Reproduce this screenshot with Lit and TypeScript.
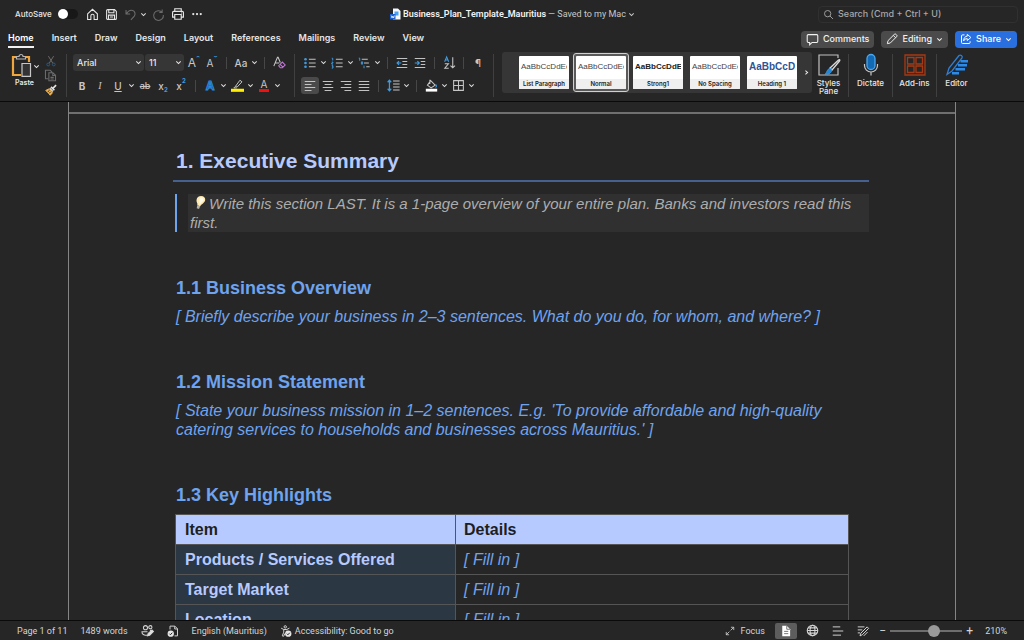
import { LitElement, html, css, svg, nothing, TemplateResult } from "lit";
import { customElement, state } from "lit/decorators.js";
import { classMap } from "lit/directives/class-map.js";

const icon = (body: TemplateResult, size = 14, box = 16) => html`<svg
  class="icon"
  width=${size}
  height=${size}
  viewBox="0 0 ${box} ${box}"
  aria-hidden="true"
>
  ${body}
</svg>`;

const BLUE = "#3f9be0";

const I = {
  home: svg`<path d="M2 7.2 8 1.6l6 5.6v7H10V9.6a2 2 0 0 0-4 0v4.6H2z"/>`,
  save: svg`<path d="M2 3.2C2 2.5 2.5 2 3.200 2h8.600L14 4.200v8.600c0 .7-.5 1.200-1.200 1.200H3.200C2.500 14 2 13.500 2 12.800zM4.600 2v3.800h6.400V2M4.300 14V8.800h7.400V14M6 11h4"/>`,
  undo: svg`<path d="M2.500 2.500v5h5M2.800 7.200C5 3.800 8 2.200 10.700 3.200c3 1.200 3.700 4.400 2 6.800L8.500 14.500"/>`,
  redo: svg`<path d="M12.500 1.800v3.700H9M12.600 5.400A6 6 0 1 0 14 8.600"/>`,
  print: svg`<path d="M4.300 5V2h7.400v3M4 11.500H1.800V6.200c0-.7.5-1.200 1.200-1.200h10c.7 0 1.200.5 1.200 1.200v5.300H12M4.300 8.600h7.400V14H4.300zM11.500 6.800h1"/>`,
  dots: svg`<g fill="currentColor" stroke="none"><circle cx="3" cy="8" r="1.500"/><circle cx="8" cy="8" r="1.500"/><circle cx="13" cy="8" r="1.500"/></g>`,
  search: svg`<circle cx="6.800" cy="6.800" r="4.600"/><path d="m10.200 10.200 4.300 4.300"/>`,
  comment: svg`<path d="M2.800 2h10.400c.7 0 1.300.6 1.300 1.300v7c0 .7-.6 1.300-1.300 1.300H7.500L4.500 14.500v-2.900H2.800c-.7 0-1.300-.6-1.300-1.300v-7C1.500 2.600 2.100 2 2.800 2z"/>`,
  pencil: svg`<path d="M1.800 14.200l.9-4L11 1.900a1.700 1.700 0 0 1 2.500 0l.6.6a1.700 1.700 0 0 1 0 2.500L5.800 13.300zM9.700 3.200l3.100 3.100"/>`,
  share: svg`<path d="M6 2.500H3.500A1.500 1.500 0 0 0 2 4v8.500A1.500 1.500 0 0 0 3.500 14H12a1.500 1.500 0 0 0 1.500-1.500V11M9.700 1.800 14.500 6 9.700 10V7.600C7.300 7.500 5.800 8.500 4.800 10.500 5 6.500 6.800 4.400 9.700 4.200z"/>`,
  cut: svg`<path d="M4.500 1.500 10.400 11M11.500 1.500 5.600 11"/><g stroke="#2b5c82"><circle cx="4.300" cy="12.600" r="1.900"/><circle cx="11.700" cy="12.600" r="1.900"/></g>`,
  copy: svg`<path d="M5 12H1.800V1.500h5.700l2 2V4M6 4.500h5l3.200 3.200v6.800H6zM10.800 4.700V8H14M8 10.300h4M8 12.300h4"/>`,
  brush: svg`<path d="M14.800 1.500 10.500 5.800M8 3.800l4.500 4.500" stroke="#e4e4e4" stroke-width="2.200"/><path d="M6.800 5 11.200 9.400 10 10.600 5.600 6.200z" fill="#e4e4e4" stroke="none"/><path d="M5 6.700 1 8.500l6 6.500 3-3.400z" fill="#f0b04a" stroke="#f0b04a"/><path d="M3.500 10.500 6 8.500M5.500 12.500l2-2" stroke="#262626"/>`,
  clear: svg`<path d="M1 12.500 5.500 1.500h.8L9 8M2.700 8.500h5"/><path d="m7 12 4.500-4.500L15 11l-3.500 3.500H9zM8.800 10.200l3.500 3.500" stroke="#c277d8"/>`,
  bullets: svg`<path d="M6.500 3h9M6.500 8h9M6.500 13h9"/><g fill="${BLUE}" stroke="none"><circle cx="2" cy="3" r="1.800"/><circle cx="2" cy="8" r="1.800"/><circle cx="2" cy="13" r="1.800"/></g>`,
  numbers: svg`<path d="M6.500 3h9M6.500 8h9M6.500 13h9"/><path d="M1 1.700h1.300v3M1 6.700h1.500v1.300H1v1.500h1.800M1 11.500h1.600v3.300H1M1.300 13.100h1.200" stroke="${BLUE}"/>`,
  multi: svg`<path d="M5 3h8M8 8h6.500M11 13h4.500"/><path d="M1 1.500h1.300v3.500M4.500 6.500h1.700v3H4.500zM8 11.500v3.500" stroke="${BLUE}"/>`,
  outdent: svg`<path d="M1 2h14M8.500 6h6.500M8.500 10h6.500M1 14h14"/><path d="M7 8H1.500M4 5.500 1.500 8 4 10.500" stroke="${BLUE}" stroke-width="1.600"/>`,
  indent: svg`<path d="M1 2h14M9 6h6M9 10h6M1 14h14"/><path d="M1 8h5.800M4.500 5.500 7 8l-2.500 2.500" stroke="${BLUE}" stroke-width="1.600"/>`,
  sort: svg`<path d="M2 7 4.500 1 7 7M2.800 5h3.400" stroke="${BLUE}"/><path d="M2.200 9.500h4.500L2.200 15h4.800M12 1.500v13M9.200 11.700l2.800 2.800 2.800-2.800"/>`,
  alignLeft: svg`<path d="M1 2h14M1 6h9M1 10h14M1 14h9"/>`,
  alignCenter: svg`<path d="M1 2h14M3.500 6h9M1 10h14M3.500 14h9"/>`,
  alignRight: svg`<path d="M1 2h14M6 6h9M1 10h14M6 14h9"/>`,
  justify: svg`<path d="M1 2h14M1 6h14M1 10h14M1 14h14"/>`,
  spacing: svg`<path d="M7.500 2.500h8M7.500 6.200h8M7.500 9.900h8M7.500 13.500h8"/><path d="M3 1.500v13M.8 4 3 1.500 5.200 4M.8 12 3 14.500 5.200 12" stroke="${BLUE}" stroke-width="1.500"/>`,
  fill: svg`<path d="m7 2 5.500 5.500L7.500 11 3 7.500zM6 1v5"/><path d="M13 6.500c1.500 1.500 1.500 3 0 4" stroke="${BLUE}"/><path d="M1 12h14v3.500H1z" fill="#fff" stroke="none"/>`,
  borders: svg`<path d="M2 2h12v12H2zM8 2v12M2 8h12"/>`,
  highlight: svg`<path d="m5.500 9 5.500-7.500 2.500 2-6 6.500zM5.500 9 3.500 11h3.500" stroke-width="1.200"/><path d="M0 12h16v3.800H0z" fill="#ffee00" stroke="none"/>`,
  peers: svg`<circle cx="5.500" cy="4.500" r="2.500"/><circle cx="11.500" cy="4" r="2"/><path d="M8 13.500C3.500 14.500 1 12.500 1.200 9.500H8M11 8h3"/><path d="m8 14.500.8-2.700 4.700-4.500 1.800 1.800-4.600 4.700z" fill="#e6e6e6"/>`,
  proof: svg`<path d="M4 6V1.500h6.500L14 5v9.500h-4M10.300 1.700V5.300H14"/><circle cx="5" cy="11.500" r="4.200" fill="#e6e6e6" stroke="none"/><path d="m3.200 11.600 1.400 1.400 2.400-2.700" stroke="#222"/>`,
  access: svg`<circle cx="7" cy="2.500" r="1.600"/><path d="M1.500 4.200 5 6v3.500L3 14.500l1.800.5 2-4M12.500 4.200 9 6v1M5 6h4"/><circle cx="11" cy="11.500" r="4.200" fill="#e6e6e6" stroke="none"/><path d="m9.200 11.600 1.400 1.400 2.400-2.700" stroke="#222"/>`,
  focus: svg`<path d="M9.500 2H14v4.500M14 2 9 7M6.500 14H2V9.500M2 14l5-5"/>`,
  pageView: svg`<path d="M3 1h6l4.500 4.500V15H3z" fill="#fff" stroke="none"/><path d="M9 1v4.700h4.500M5.500 8.500h5.500M5.500 11.500h5.500" stroke="#5d5d5d" stroke-width="1.100"/>`,
  globe: svg`<circle cx="8" cy="8" r="6.500"/><ellipse cx="8" cy="8" rx="3" ry="6.500"/><path d="M1.500 8h13M2.500 4.800h11M2.500 11.200h11"/>`,
  outline: svg`<path d="M1 2.500h10M1 8h14M1 13.500h11"/>`,
  draft: svg`<path d="M1 2.500h9M1 6.500h6M1 10.500h3M4 14.500l1-3.500 8.500-8.500 2 2L7 13zM9 14.500l5-5"/>`,
  chevron: svg`<path d="m3 5.500 5 5L13 5.500" stroke-width="2.400"/>`,
  chevronRight: svg`<path d="m5.500 3.500 5 4.500-5 4.500" stroke-width="2.400"/>`,
};

const paste = html`<svg class="icon" width="22" height="24" viewBox="-2 0 22 24" aria-hidden="true">
  <path d="M6 3H2v18h8M14 3h4v5" stroke="#f0a63c" stroke-width="2.200" />
  <path d="M5.500 5V2.500h2.500a2 2 0 0 1 4 0h2.500V5z" stroke="#b5b5b5" stroke-width="1.200" />
  <path d="M11 9.500h8.500v12.800H11z" fill="#333" stroke="#c8c8c8" stroke-width="1.200" />
</svg>`;

const wordDoc = html`<svg class="icon" width="11" height="12" viewBox="0 0 11 12" aria-hidden="true">
  <path d="M3 .500h5L10.500 3v8.500H3z" fill="#f4f8ff" stroke="none" />
  <path d="M4.500 3.500h4v4h-4z" fill="#4aa3f0" stroke="none" />
  <path d="M0 6h5.500v5.500H0z" fill="#1c5fd0" stroke="none" />
  <path d="m1.200 7.500.8 2.500.8-2 .8 2 .8-2.500" stroke="#fff" stroke-width=".7" />
</svg>`;

const big = {
  styles: html`<svg class="icon" width="22" height="22" viewBox="0 0 22 22" aria-hidden="true">
    <path d="M20 14v7H1V1h19v3" stroke="#c0c0c0" stroke-width="1.200" />
    <path d="M21.500 7 14 16l-2-2 8.500-8c1-.8 1.800 0 1 1z" fill="#2b2b2b" stroke="#dcdcdc" />
    <path d="M12 14.200c1.500.3 2.200 1.500 1.500 3.300-1.200 2.500-4 3-6.500 2.800 2-1.500 1.500-5 5-6.100z" fill="#1f86d8" stroke="#4aa8ee" stroke-width=".6" />
  </svg>`,
  mic: html`<svg class="icon" width="22" height="22" viewBox="0 0 22 22" aria-hidden="true">
    <rect x="7" y="0.500" width="8" height="15" rx="4" fill="#1269b4" stroke="#4aa6ee" />
    <path d="M4.500 10v1.500a6.500 6.500 0 0 0 13 0V10M11 18v3.500" stroke="#c8c8c8" stroke-width="1.200" />
  </svg>`,
  addins: html`<svg class="icon" width="22" height="22" viewBox="0 0 22 22" aria-hidden="true">
    <g stroke="#a63a14" stroke-width="1.300">
      <path d="M1 1h20v20H1z" />
      <path d="M3.500 3.500h6.500v6.500h-6.500zM12 3.500h6.500v6.500h-6.500zM3.500 12h6.500v6.500h-6.500zM12 12h6.500v6.500h-6.500z" />
    </g>
  </svg>`,
  editor: html`<svg class="icon" width="22" height="22" viewBox="0 0 22 22" aria-hidden="true">
    <path d="M1 20.500 3 14 13 1.500c1.500-1.200 4 .5 3 2.500L6 17z" stroke="#2f7fd6" stroke-width="1.300" />
    <path d="M14.500 7.300H22M12 11.300h9M9.500 15.300H19M6 19.300h7" stroke="#2b8bea" stroke-width="2.600" />
  </svg>`,
};

const bulb = html`<svg class="bulb" width="13" height="16" viewBox="0 0 13 16" role="img" aria-label="Idea">
  <path d="M8 1c3 0 4.500 1.800 4.200 4C11.900 8 8.900 8.600 7.200 11.200L4.300 10.200C4.900 8.200 3.200 7.300 3.500 5 3.800 2.600 5.700 1 8 1z" fill="#ffe9ae" />
  <path d="M8.500 2.200c1.600.2 2.400 1.300 2.200 2.700C10.400 6.600 8.200 7.300 6.800 9 6.300 6 6 2.500 8.500 2.200z" fill="#fffbe8" />
  <path d="m4.300 10.200 2.900 1-1.200 2.900-2.300-.8z" fill="#b9b4a6" />
</svg>`;

@customElement("app-root")
export class AppRoot extends LitElement {
  static styles = css`
    :host {
      display: flex;
      flex-direction: column;
      height: 100vh;
      overflow: hidden;
      background: #262626;
      color: #e6e6e6;
      font-family: Inter, "Liberation Sans", sans-serif;
      font-size: 9px;
      line-height: 12px;
    }
    * { box-sizing: border-box; }
    button, select, input {
      font: inherit;
      color: inherit;
      background: none;
      border: 0;
      margin: 0;
      padding: 0;
    }
    button { display: flex; align-items: center; justify-content: center; white-space: nowrap; }
    a { color: inherit; text-decoration: none; }
    .icon {
      flex: none;
      display: block;
      fill: none;
      stroke: currentColor;
      stroke-width: 1.3;
      overflow: visible;
    }
    .dim { color: #6c6c6c; }

    .titlebar {
      display: grid;
      grid-template-columns: 1fr auto 1fr;
      align-items: center;
      height: 28px;
      padding: 0 6px 0 15px;
    }
    .quick { display: flex; align-items: center; }
    .quick button { width: 19px; height: 18px; }
    .quick .caret { width: 8px; }
    .quick .redo { width: 21px; }
    .autosave { display: flex; align-items: center; gap: 6px; margin-right: 5px; font-size: 8px; font-weight: 500; }
    .toggle {
      appearance: none;
      display: flex;
      align-items: center;
      width: 20px;
      height: 10px;
      border-radius: 5px;
      background: #181818;
    }
    .toggle::before { content: ""; width: 10px; height: 10px; border-radius: 50%; background: #fff; }
    .doctitle { display: flex; align-items: center; gap: 2px; padding-right: 8px; color: #c8c8c8; font-family: Roboto, sans-serif; }
    .doctitle h1 { margin: 0; font-size: 9px; font-weight: 600; color: #f2f2f2; }
    .search {
      justify-self: end;
      display: flex;
      align-items: center;
      gap: 4px;
      width: 200px;
      height: 17px;
      padding: 0 4px;
      border: 1px solid #303030;
      border-radius: 4px;
      color: #a8a8a8;
    }
    .search input { flex: 1; min-width: 0; outline: 0; font-weight: 500; }
    .search input::placeholder { color: #a8a8a8; opacity: 1; }

    .tabs { display: flex; justify-content: space-between; align-items: center; height: 22px; padding: 0 7px 0 8px; }
    nav { display: flex; gap: 18px; font-weight: 600; }
    nav a { padding: 2px 0; border-bottom: 2px solid transparent; }
    nav a.on { border-color: #f0f0f0; color: #fff; }
    .actions { display: flex; gap: 7px; font-size: 9px; font-weight: 500; }
    .actions button { height: 17px; padding: 0 5px; gap: 4px; border-radius: 4px; background: #4b4b4b; color: #f2f2f2; }
    .actions .share { background: #2a6fe0; color: #fff; }

    .ribbon { display: flex; height: 52px; padding: 0 0 0 7px; border-bottom: 1px solid #0a0a0a; align-items: flex-start; }
    .group { display: flex; height: 43px; margin-top: 4px; padding: 0 6px; border-right: 1px solid #404040; }
    .clip { gap: 2px; padding-left: 0; width: 60px; }
    .paste { flex-direction: column; justify-content: flex-start; font-size: 7px; font-weight: 600; line-height: 9px; width: 35px; }
    .paste .row { display: flex; align-items: center; gap: 2px; }
    .small { display: flex; flex-direction: column; justify-content: space-between; }
    .small button { height: 14px; }
    .rows { display: flex; flex-direction: column; gap: 6px; }
    .row { display: flex; align-items: center; }
    .rows .row { height: 17px; }
    .tool { width: 18px; height: 17px; border-radius: 3px; color: #c6c6c6; }
    .tool.pressed { background: #4a4a4a; }
    .caret { width: 9px; height: 17px; color: #dcdcdc; }
    .sep { width: 11px; display: flex; justify-content: center; }
    .sep::before { content: ""; width: 1px; height: 12px; background: #474747; }
    .pick { position: relative; display: flex; align-items: center; height: 17px; background: #363636; border-radius: 3px; margin-right: 1px; }
    .pick select { appearance: none; width: 100%; height: 17px; padding-left: 4px; outline: 0; font-weight: 500; }
    .pick .icon { position: absolute; right: 2px; pointer-events: none; }
    .face { width: 71px; }
    .size { width: 39px; }
    .glyph { font-size: 10px; font-weight: 500; }
    .bold { font-weight: 700; }
    .ital { font-family: "Liberation Serif", serif; font-style: italic; }
    .under { text-decoration: underline; }
    .strike { font-size: 9px; text-decoration: line-through; }
    .glyph small { font-size: 6px; font-weight: 700; color: #3f9be0; }
    .glyph.low small { align-self: flex-end; line-height: 8px; }
    .glyph.high small { align-self: flex-start; line-height: 8px; }
    .grow { font-size: 12px; font-weight: 400; }
    .shrink { font-size: 10px; font-weight: 400; }
    .tool.mark small { font-size: 9px; line-height: 12px; }
    .effect { color: #1d4d78; font-size: 12px; font-weight: 600; -webkit-text-stroke: 1px #2a8ce0; }
    .fontcolor { font-size: 10px; line-height: 10px; }
    .fontcolor span { border-bottom: 3px solid #f01010; padding: 0 2px; }

    .gallery { display: flex; align-items: center; gap: 1px; height: 41px; margin: 2px 0 0 8px; padding: 0 0 0 14px; background: #363636; border-radius: 3px; }
    .card { padding: 2px; border: 1px solid transparent; border-radius: 3px; width: 56px; height: 39px; }
    .card.sel { border-color: #d0d0d0; background: #5a5a5a; }
    .sheet { display: flex; flex-direction: column; width: 50px; height: 33px; background: #fff; border-radius: 1px; overflow: hidden; }
    .sample { height: 23px; padding-left: 2px; margin-right: 2px; overflow: hidden; font: 8px/22px "Liberation Sans", sans-serif; color: #444; text-align: left; }
    .sample.strong { font-weight: 700; color: #222; }
    .sample.heading { font-size: 10px; font-weight: 700; color: #2f5496; }
    .name { height: 10px; font-size: 6px; line-height: 9px; font-weight: 600; color: #1c1c1c; background: #efefef; text-align: center; }
    .more { width: 11px; height: 40px; }
    .bigtool { flex-direction: column; justify-content: flex-start; gap: 3px; width: 33px; font-size: 8px; font-weight: 500; line-height: 8px; white-space: normal; text-align: center; }
    .group.single { padding: 0 5px; }
    .group.first { padding: 0 3px 0 0; }
    .group.last { border: 0; padding: 0 3px; }

    .canvas { flex: 1; min-height: 0; overflow: hidden; padding: 0 68px; }
    .page { min-height: 100%; border: solid #858585; border-width: 0 1px; }
    .break { height: 12px; border-bottom: 2px solid #707070; }
    .text { margin: 0 86px 0 104px; padding-top: 35px; font-family: "Liberation Sans", Arial, sans-serif; font-size: 16px; line-height: 19px; }
    .text h2 { margin: 0; padding: 0 3px 7px; border-bottom: 2px solid #46618f; font-size: 21px; line-height: 24px; color: #b7caff; }
    .callout { margin: 12px 0 0 2px; border-left: 2px solid #6ea3ee; padding-left: 11px; font-size: 15px; font-style: italic; color: #adadad; }
    .callout p { margin: 0; padding-left: 2px; background: #303030; }
    .bulb { display: inline-block; margin: 0 3px; vertical-align: -2px; }
    .text h3 { margin: 45px 3px 8px; font-size: 18px; line-height: 22px; color: #6ea3ee; }
    .prompt { margin: 0 3px; font-style: italic; color: #6ea3ee; }
    table { width: calc(100% - 22px); margin-left: 2px; border-collapse: collapse; table-layout: fixed; }
    th, td { height: 30px; padding: 0 9px; border: 1px solid #555; text-align: left; }
    th:first-child { width: 280px; }
    td, thead th:last-child { padding: 0 8px; }
    td { font-style: italic; color: #6ea3ee; }
    thead th { background: #b7caff; color: #1e1e1e; }
    tbody th { background: #2b3743; color: #b7caff; }

    .status { position: relative; display: flex; justify-content: space-between; align-items: center; height: 20px; padding: 0 17px; border-top: 1px solid #0a0a0a; background: #262626; color: #d4d4d4; font-family: Roboto, sans-serif; }
    .status div { display: flex; align-items: center; }
    .facts { gap: 13px; }
    .facts button { gap: 3px; }
    .views { gap: 0; }
    .views button { width: 25px; height: 16px; }
    .views .focus { width: 45px; gap: 6px; margin-right: 6px; }
    .views .current { width: 22px; background: #5d5d5d; border-radius: 2px; margin: 0 3px 0 2px; }
    .views .step { width: 15px; font-size: 12px; }
    .zoom { appearance: none; width: 72px; height: 12px; background: linear-gradient(#6e6e6e, #6e6e6e) center / 100% 2px no-repeat; }
    .zoom::-webkit-slider-thumb { appearance: none; width: 12px; height: 12px; border-radius: 50%; background: #9a9a9a; }
    .level { margin-left: 8px; }
  `;

  @state() private tab = "Home";
  @state() private style_ = "Normal";

  private tool(label: string, body: TemplateResult, caret = false, pressed = false, size = 13) {
    return html`<button class=${classMap({ tool: true, pressed })} aria-label=${label}>${icon(body, size)}</button>
      ${caret ? this.caret(label + " options") : nothing}`;
  }

  private caret(label: string) {
    return html`<button class="caret" aria-label=${label}>${icon(I.chevron, 7)}</button>`;
  }

  private big(label: string, art: TemplateResult, cls = "single") {
    return html`<div class="group ${cls}"><button class="bigtool">${art}<span>${label}</span></button></div>`;
  }

  private card(name: string, kind = "") {
    const text = kind === "heading" ? "AaBbCcD" : kind === "strong" ? "AaBbCcDdE" : "AaBbCcDdEe";
    return html`<button
      class=${classMap({ card: true, sel: this.style_ === name })}
      @click=${() => (this.style_ = name)}
    >
      <span class="sheet"><span class="sample ${kind}">${text}</span><span class="name">${name}</span></span>
    </button>`;
  }

  render() {
    const tabs = ["Home", "Insert", "Draw", "Design", "Layout", "References", "Mailings", "Review", "View"];
    const sep = html`<span class="sep"></span>`;
    return html`
      <header class="titlebar">
        <div class="quick">
          <label class="autosave">AutoSave<input class="toggle" type="checkbox" role="switch" /></label>
          <button aria-label="Home">${icon(I.home, 13)}</button>
          <button aria-label="Save">${icon(I.save, 13)}</button>
          <button class="dim" aria-label="Undo">${icon(I.undo, 13)}</button>
          <button class="caret dim" aria-label="Undo history">${icon(I.chevron, 7)}</button>
          <button class="dim redo" aria-label="Redo">${icon(I.redo, 13)}</button>
          <button aria-label="Print">${icon(I.print, 14)}</button>
          <button aria-label="More">${icon(I.dots, 12)}</button>
        </div>
        <div class="doctitle">
          ${wordDoc}
          <h1>Business_Plan_Template_Mauritius</h1>
          <span>— Saved to my Mac</span>${icon(I.chevron, 7)}
        </div>
        <label class="search">${icon(I.search, 11)}<input type="search" aria-label="Search" placeholder="Search (Cmd + Ctrl + U)" /></label>
      </header>

      <div class="tabs">
        <nav>
          ${tabs.map(
            (t) => html`<a href="#" class=${classMap({ on: t === this.tab })} @click=${(e: Event) => {
              e.preventDefault();
              this.tab = t;
            }}>${t}</a>`
          )}
        </nav>
        <div class="actions">
          <button>${icon(I.comment, 13)}Comments</button>
          <button>${icon(I.pencil, 12)}Editing${icon(I.chevron, 7)}</button>
          <button class="share">${icon(I.share, 12)}Share${icon(I.chevron, 7)}</button>
        </div>
      </div>

      <div class="ribbon">
        <div class="group clip">
          <button class="paste"><span class="row">${paste}${icon(I.chevron, 7)}</span>Paste</button>
          <div class="small">
            <button class="dim" aria-label="Cut">${icon(I.cut, 12)}</button>
            <button class="dim" aria-label="Copy">${icon(I.copy, 13)}</button>
            <button aria-label="Format painter">${icon(I.brush, 12)}</button>
          </div>
        </div>
        <div class="group rows">
          <div class="row">
            <label class="pick face"><select aria-label="Font"><option>Arial</option></select>${icon(I.chevron, 7)}</label>
            <label class="pick size"><select aria-label="Font size"><option>11</option></select>${icon(I.chevron, 7)}</label>
            <button class="tool glyph grow high mark" aria-label="Grow font">A<small>ˆ</small></button>
            <button class="tool glyph shrink high mark" aria-label="Shrink font">A<small>ˇ</small></button>
            ${sep}
            <button class="tool glyph" aria-label="Change case">Aa</button>${this.caret("Case options")}
            ${sep} ${this.tool("Clear formatting", I.clear)}
          </div>
          <div class="row">
            <button class="tool glyph bold" aria-label="Bold">B</button>
            <button class="tool glyph ital" aria-label="Italic">I</button>
            <button class="tool glyph under" aria-label="Underline">U</button>${this.caret("Underline options")}
            <button class="tool glyph strike" aria-label="Strikethrough">ab</button>
            <button class="tool glyph low" aria-label="Subscript">x<small>2</small></button>
            <button class="tool glyph high" aria-label="Superscript">x<small>2</small></button>
            ${sep}
            <button class="tool effect" aria-label="Text effects">A</button>${this.caret("Text effect options")}
            ${this.tool("Highlight", I.highlight, true)}
            <button class="tool fontcolor" aria-label="Font colour"><span>A</span></button>${this.caret("Font colour options")}
          </div>
        </div>
        <div class="group rows">
          <div class="row">
            ${this.tool("Bullets", I.bullets, true, false, 12)} ${this.tool("Numbering", I.numbers, true, false, 12)}
            ${this.tool("Multilevel list", I.multi, true, false, 12)} ${sep}
            ${this.tool("Decrease indent", I.outdent, false, false, 12)} ${this.tool("Increase indent", I.indent, false, false, 12)}
            ${sep} ${this.tool("Sort", I.sort)} ${sep}
            <button class="tool glyph" aria-label="Show formatting marks">¶</button>
          </div>
          <div class="row">
            ${this.tool("Align left", I.alignLeft, false, true, 12)} ${this.tool("Centre", I.alignCenter, false, false, 12)}
            ${this.tool("Align right", I.alignRight, false, false, 12)} ${this.tool("Justify", I.justify, false, false, 12)}
            ${sep} ${this.tool("Line spacing", I.spacing, true)} ${sep} ${this.tool("Shading", I.fill, true)}
            ${this.tool("Borders", I.borders, true)}
          </div>
        </div>
        <div class="gallery">
          ${this.card("List Paragraph")}${this.card("Normal")}${this.card("Strong1", "strong")}${this.card("No Spacing")}${this.card("Heading 1", "heading")}
          <button class="more" aria-label="More styles">${icon(I.chevronRight, 7)}</button>
        </div>
        ${this.big("Styles Pane", big.styles, "first")} ${this.big("Dictate", big.mic)}
        ${this.big("Add-ins", big.addins)} ${this.big("Editor", big.editor, "last")}
      </div>

      <main class="canvas">
        <article class="page">
          <div class="break"></div>
          <div class="text">
            <h2>1. Executive Summary</h2>
            <div class="callout">
              <p>${bulb}Write this section LAST. It is a 1-page overview of your entire plan. Banks and investors read this first.</p>
            </div>
            <h3>1.1 Business Overview</h3>
            <p class="prompt">[ Briefly describe your business in 2–3 sentences. What do you do, for whom, and where? ]</p>
            <h3>1.2 Mission Statement</h3>
            <p class="prompt">[ State your business mission in 1–2 sentences. E.g. 'To provide affordable and high-quality catering services to households and businesses across Mauritius.' ]</p>
            <h3>1.3 Key Highlights</h3>
            <table>
              <thead><tr><th>Item</th><th>Details</th></tr></thead>
              <tbody>
                ${["Products / Services Offered", "Target Market", "Location"].map(
                  (r) => html`<tr><th scope="row">${r}</th><td>[ Fill in ]</td></tr>`
                )}
              </tbody>
            </table>
          </div>
        </article>
      </main>

      <footer class="status">
        <div class="facts">
          <button>Page 1 of 11</button>
          <button>1489 words</button>
          <button aria-label="Collaborators">${icon(I.peers, 13)}</button>
          <button aria-label="Proofing">${icon(I.proof, 12)}</button>
          <button>English (Mauritius)</button>
          <button>${icon(I.access, 12)}Accessibility: Good to go</button>
        </div>
        <div class="views">
          <button class="focus">${icon(I.focus, 10)}Focus</button>
          <button class="current" aria-label="Print layout">${icon(I.pageView, 12)}</button>
          <button aria-label="Web layout">${icon(I.globe, 13)}</button>
          <button aria-label="Outline">${icon(I.outline, 12)}</button>
          <button aria-label="Draft">${icon(I.draft, 12)}</button>
          <button class="step" aria-label="Zoom out">−</button>
          <input class="zoom" type="range" aria-label="Zoom" min="10" max="330" value="210" />
          <button class="step" aria-label="Zoom in">+</button>
          <span class="level">210%</span>
        </div>
      </footer>
    `;
  }
}
